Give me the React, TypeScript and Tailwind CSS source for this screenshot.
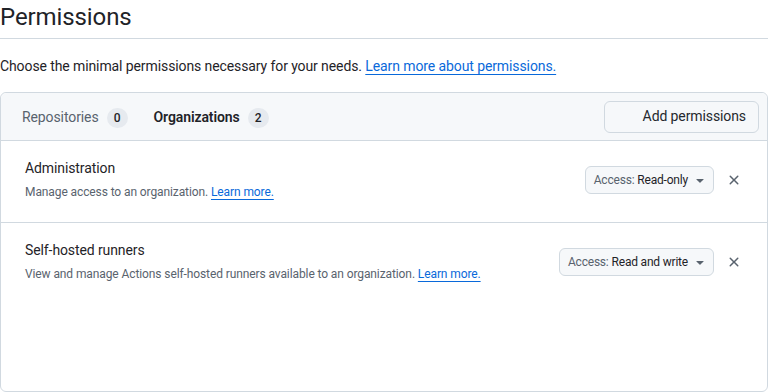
function XIcon() {
  return (
    <svg width="16" height="16" viewBox="0 0 16 16" fill="#59636e" aria-hidden="true">
      <path d="M3.72 3.72a.75.75 0 0 1 1.06 0L8 6.94l3.22-3.22a.749.749 0 0 1 1.275.326.749.749 0 0 1-.215.734L9.06 8l3.22 3.22a.749.749 0 0 1-.326 1.275.749.749 0 0 1-.734-.215L8 9.06l-3.22 3.22a.751.751 0 0 1-1.042-.018.751.751 0 0 1-.018-1.042L6.94 8 3.72 4.78a.75.75 0 0 1 0-1.06Z" />
    </svg>
  );
}

function Caret() {
  return (
    <svg width="16" height="16" viewBox="0 0 16 16" fill="#59636e" aria-hidden="true">
      <path d="m4.427 7.427 3.396 3.396a.25.25 0 0 0 .354 0l3.396-3.396A.25.25 0 0 0 11.396 7H4.604a.25.25 0 0 0-.177.427Z" />
    </svg>
  );
}

function Row({
  title,
  desc,
  access,
  last,
}: {
  title: string;
  desc: string;
  access: string;
  last?: boolean;
}) {
  return (
    <div className={`flex items-center pl-6 pr-[25px] pt-[17px] pb-[21px] ${last ? "" : "border-b border-[#d1d9e0]"}`}>
      <div className="flex-1 min-w-0">
        <div className="text-[14px] leading-[21px] text-[#1f2328]">{title}</div>
        <div className="mt-1 text-[12px] leading-[18px] text-[#59636e]">
          {desc}{" "}
          <a href="#" className="text-[#0969da] underline underline-offset-[3px]">
            Learn more.
          </a>
        </div>
      </div>
      <button className="flex h-[28px] items-center rounded-md border border-[#d1d9e0] bg-[#f6f8fa] pl-[8px] pr-[5px] text-[12px] tracking-[-0.2px]">
        <span className="text-[#59636e]">Access:</span>
        <span className="ml-[3px] text-[#1f2328]">{access}</span>
        <span className="ml-[4px] flex">
          <Caret />
        </span>
      </button>
      <span className="ml-[12px] flex">
        <XIcon />
      </span>
    </div>
  );
}

export default function App() {
  return (
    <div className="w-[768px] h-[392px] overflow-hidden bg-white text-[#1f2328] tracking-[-0.1px]" style={{ fontFamily: "Roboto, 'Liberation Sans', sans-serif" }}>
      <div className="h-[39px] border-b border-[#d1d9e0] text-[24px] leading-[35px] font-normal text-[#1f2328]">
        Permissions
      </div>
      <p className="mt-[17px] text-[14px] leading-[21px]">
        Choose the minimal permissions necessary for your needs.{" "}
        <a href="#" className="text-[#0969da] underline underline-offset-[3px]">
          Learn more about permissions.
        </a>
      </p>
      <div className="mt-[15px] h-[300px] rounded-md border border-[#d1d9e0]">
        <div className="flex h-[48px] items-center rounded-t-md border-b border-[#d1d9e0] bg-[#f6f8fa] pl-[21px] pr-2">
          <div className="flex flex-1 items-center pt-[2px] text-[14px]">
            <span className="text-[#59636e]">Repositories</span>
            <span className="ml-2 flex h-[20px] min-w-[21px] items-center justify-center rounded-full bg-[#e6eaef] px-[6px] text-[12px] font-medium text-[#1f2328]">
              0
            </span>
            <span className="ml-[26px] font-semibold text-[#1f2328]">Organizations</span>
            <span className="ml-2 flex h-[20px] min-w-[21px] items-center justify-center rounded-full bg-[#e6eaef] px-[6px] text-[12px] font-medium text-[#1f2328]">
              2
            </span>
          </div>
          <button className="flex h-[32px] items-center rounded-md border border-[#d1d9e0] bg-[#f6f8fa] pl-[38px] pr-3 text-[14px] font-normal text-[#25292e]">
            Add permissions
          </button>
        </div>
        <Row
          title="Administration"
          desc="Manage access to an organization."
          access="Read-only"
        />
        <Row
          title="Self-hosted runners"
          desc="View and manage Actions self-hosted runners available to an organization."
          access="Read and write"
          last
        />
      </div>
    </div>
  );
}
